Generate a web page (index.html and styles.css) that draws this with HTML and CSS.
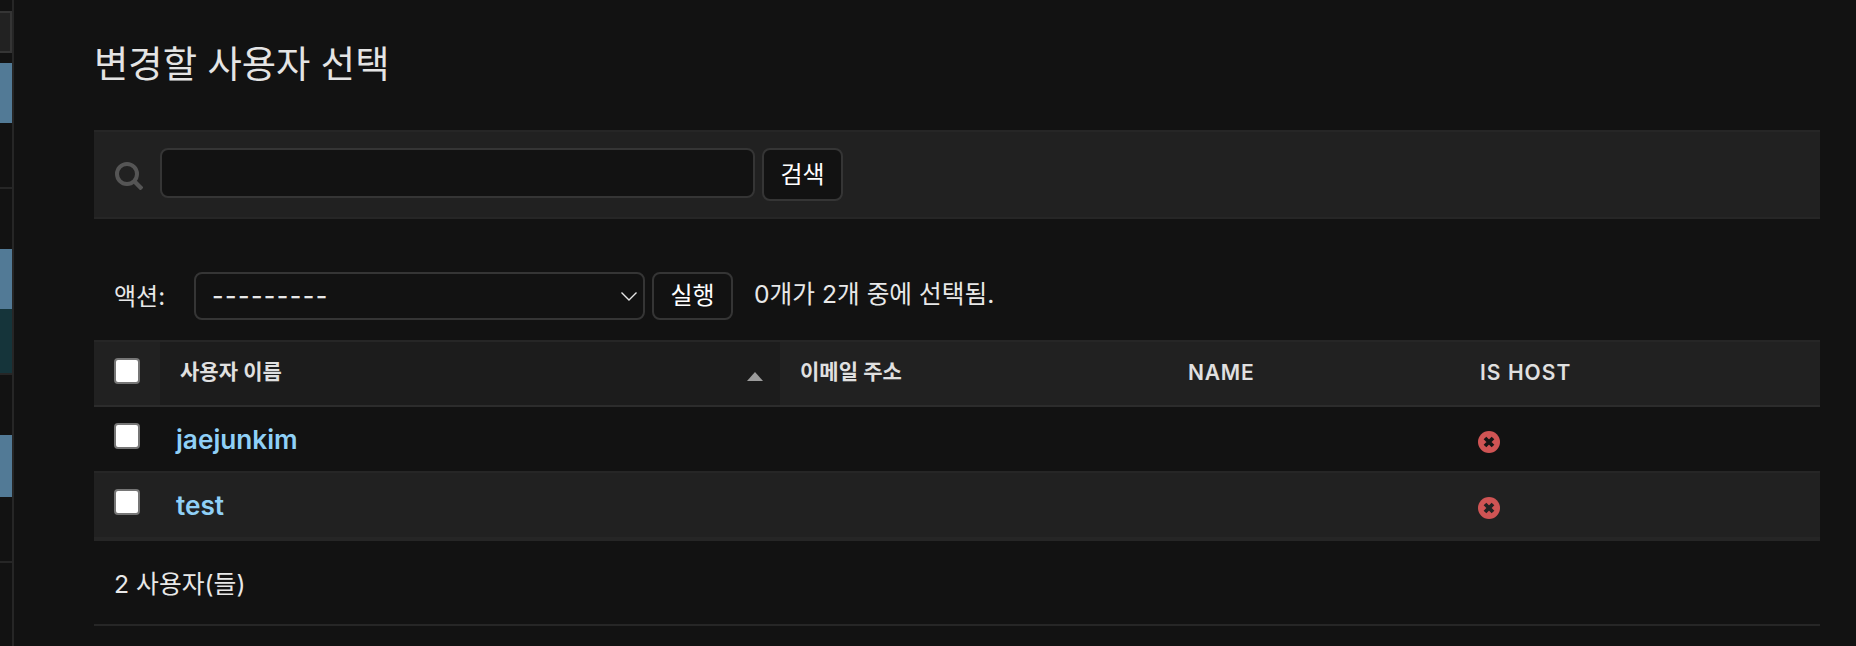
FILE: index.html
```html
<!DOCTYPE html>
<html lang="ko">
<head>
<meta charset="utf-8">
<title>변경할 사용자 선택</title>
<link rel="stylesheet" href="styles.css">
</head>
<body>
<div class="shell">
  <aside class="sidebar">
    <div class="side-filter"></div>
    <div class="side-group">
      <div class="side-row blue"></div>
      <div class="side-row tall"></div>
    </div>
    <div class="side-group">
      <div class="side-row"></div>
      <div class="side-row blue"></div>
      <div class="side-row tall teal"></div>
    </div>
    <div class="side-group">
      <div class="side-row"></div>
      <div class="side-row blue wide"></div>
      <div class="side-row tall"></div>
    </div>
  </aside>
  <main class="content">
    <h1 class="title">변경할 사용자 선택</h1>
    <form class="search-bar">
      <svg class="search-icon" viewBox="0 0 28 28" aria-hidden="true"><circle cx="12" cy="12" r="10" fill="none" stroke="#555" stroke-width="4"/><path d="M19 19 27 27" stroke="#555" stroke-width="4.4" fill="none"/></svg>
      <input class="search-input" type="text">
      <button class="btn search-btn" type="button">검색</button>
    </form>
    <div class="actions">
      <span class="action-label">액션:</span>
      <div class="select">
        <span class="select-value">---------</span>
        <svg class="chevron" viewBox="0 0 18 10" aria-hidden="true"><path d="M1.5 1.5 9 9l7.5-7.5" fill="none" stroke="#e6e6e6" stroke-width="1.4"/></svg>
      </div>
      <button class="btn run-btn" type="button">실행</button>
      <span class="counter">0개가 2개 중에 선택됨.</span>
    </div>
    <div class="table">
      <div class="row head">
        <div class="cell check"><span class="box"></span></div>
        <div class="cell c-user sorted">사용자 이름<i class="sort-up"></i></div>
        <div class="cell c-mail">이메일 주소</div>
        <div class="cell c-name latin">NAME</div>
        <div class="cell c-host latin">IS HOST</div>
      </div>
      <div class="row body r1">
        <div class="cell check"><span class="box"></span></div>
        <a class="cell c-user link">jaejunkim</a>
        <div class="cell c-mail"></div>
        <div class="cell c-name"></div>
        <div class="cell c-host"><svg class="no-icon" viewBox="0 0 22 22" aria-hidden="true"><circle cx="11" cy="11" r="11" fill="#cf5454"/><path d="M7 7l8 8M15 7l-8 8" stroke="#151515" stroke-width="3.8"/></svg></div>
      </div>
      <div class="row body r2">
        <div class="cell check"><span class="box"></span></div>
        <a class="cell c-user link">test</a>
        <div class="cell c-mail"></div>
        <div class="cell c-name"></div>
        <div class="cell c-host"><svg class="no-icon" viewBox="0 0 22 22" aria-hidden="true"><circle cx="11" cy="11" r="11" fill="#cf5454"/><path d="M7 7l8 8M15 7l-8 8" stroke="#222" stroke-width="3.8"/></svg></div>
      </div>
    </div>
    <p class="paginator">2 사용자(들)</p>
  </main>
</div>
</body>
</html>
```
FILE: styles.css
```css
* { box-sizing: border-box; }
html, body { margin: 0; height: 100%; overflow: hidden; }
body {
  background: #121212;
  color: #e8e8e8;
  font-family: Inter, "Noto Sans CJK KR", sans-serif;
  font-size: 20px;
}
.shell { display: flex; height: 646px; }

.sidebar {
  width: 14px;
  flex: none;
  border-right: 2px solid #262626;
  padding-top: 11px;
  display: flex;
  flex-direction: column;
}
.side-filter { height: 42px; background: #222; border: 2px solid #353535; border-left: 0; margin-bottom: 10px; }
.side-group { border-bottom: 2px solid #262626; }
.side-row { height: 60px; }
.side-row.blue { background: #527a96; }
.side-row.wide { height: 62px; }
.side-row.tall { height: 64px; }
.side-row.teal { background: #15343a; }

.content { flex: none; width: 1726px; margin-left: 80px; }
.title {
  margin: 40px 0 0;
  height: 90px;
  font-size: 37.3px;
  font-weight: 400;
  line-height: 50px;
  color: #e4e4e4;
}
.search-bar {
  height: 89px;
  background: #212121;
  border-top: 2px solid #262626;
  border-bottom: 2px solid #262626;
  padding: 16px 0 0 21px;
  display: flex;
  align-items: flex-start;
}
.search-icon { width: 28px; height: 28px; margin: 14px 0 0; flex: none; }
.search-input {
  width: 595px;
  height: 50px;
  margin-left: 17px;
  background: #121212;
  border: 2px solid #353535;
  border-radius: 8px;
}
.btn {
  background: #121212;
  color: #ffffff;
  border: 2px solid #353535;
  border-radius: 8px;
  font: 400 24px Inter, "Noto Sans CJK KR", sans-serif;
  line-height: 44px;
  padding: 0;
  height: 53px;
}
.search-btn { width: 81px; margin-left: 7px; }

.actions { display: flex; align-items: flex-start; margin-top: 53px; height: 68px; padding-left: 20px; }
.action-label { width: 80px; line-height: 50px; font-size: 24px; }
.select {
  width: 451px;
  height: 48px;
  border: 2px solid #353535;
  border-radius: 8px;
  padding: 0 5px 0 16px;
  display: flex;
  align-items: center;
  justify-content: space-between;
  font-size: 25px;
  letter-spacing: 1.4px;
}
.select-value { font-weight: 500; }
.chevron { width: 18px; height: 10px; }
.run-btn { width: 81px; height: 48px; margin-left: 7px; }
.counter { margin-left: 21px; line-height: 45px; font-size: 24.7px; }

.row { display: flex; }
.head {
  height: 67px;
  background: #212121;
  border-top: 2px solid #262626;
  border-bottom: 2px solid #2c2c2c;
  font-size: 21px;
  font-weight: 600;
  color: #e0e0e0;
}
.cell { flex: none; padding: 0; }
.check { width: 66px; padding-left: 20px; }
.box {
  display: block;
  width: 26px;
  height: 26px;
  background: #fff;
  border: 2px solid #767676;
  border-radius: 4px;
}
.head .check .box { margin-top: 16px; }
.c-user { width: 620px; padding-left: 20px; }
.c-mail { width: 388px; padding-left: 20px; }
.c-name { width: 292px; padding-left: 20px; }
.c-host { width: 360px; padding-left: 20px; }
.head .cell:not(.check) { line-height: 60px; }
.head .cell.latin { line-height: 62px; letter-spacing: 0.8px; }
.head .cell.c-host.latin { letter-spacing: 1.05px; }
.sorted { background: #1c1c1c; position: relative; }
.sort-up {
  position: absolute;
  right: 17px;
  top: 30px;
  width: 0;
  height: 0;
  border-left: 8px solid transparent;
  border-right: 8px solid transparent;
  border-bottom: 9px solid #9c9c9c;
}
.body { font-size: 26.2px; }
.r1 { height: 64px; }
.r2 { height: 70px; background: #212121; border-top: 2px solid #262626; border-bottom: 4px solid #262626; }
.r1 .box { margin-top: 16px; }
.r2 .box { margin-top: 16px; }
.link { color: #8fd0f7; font-weight: 600; padding-left: 16px; line-height: 66px; }
.body .c-host { padding-left: 18px; }
.no-icon { display: block; width: 22px; height: 22px; margin-top: 24px; }
.paginator {
  margin: 0;
  height: 85px;
  padding: 23px 0 0 20px;
  border-bottom: 2px solid #262626;
  font-size: 24.8px;
  line-height: 40px;
}
```
